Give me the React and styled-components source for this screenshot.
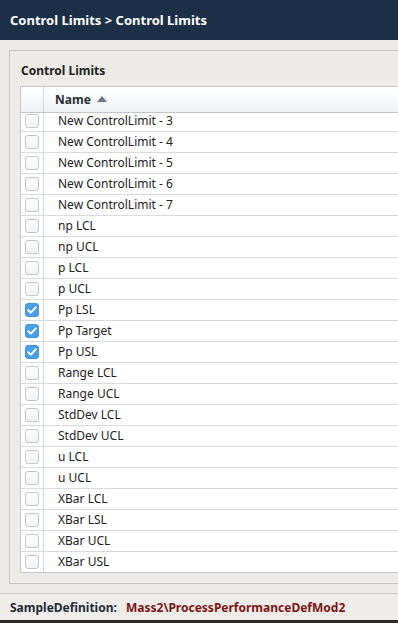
import React from 'react'
import styled, { createGlobalStyle } from 'styled-components'

const rows = [
  { name: 'New ControlLimit - 3' },
  { name: 'New ControlLimit - 4' },
  { name: 'New ControlLimit - 5' },
  { name: 'New ControlLimit - 6' },
  { name: 'New ControlLimit - 7' },
  { name: 'np LCL' },
  { name: 'np UCL' },
  { name: 'p LCL' },
  { name: 'p UCL' },
  { name: 'Pp LSL', checked: true },
  { name: 'Pp Target', checked: true },
  { name: 'Pp USL', checked: true },
  { name: 'Range LCL' },
  { name: 'Range UCL' },
  { name: 'StdDev LCL' },
  { name: 'StdDev UCL' },
  { name: 'u LCL' },
  { name: 'u UCL' },
  { name: 'XBar LCL' },
  { name: 'XBar LSL' },
  { name: 'XBar UCL' },
  { name: 'XBar USL' },
]

const Global = createGlobalStyle`
  html, body { margin:0; padding:0; }
  body {
    font-family: "Noto Sans", "Open Sans", sans-serif;
    font-size:12px;
    color:#222;
    background:#edebe7;
    overflow:hidden;
  }
`

const App = () => {
  return (
    <Page>
      <Global />
      <TopBar>Control Limits &gt; Control Limits</TopBar>
      <Main>
        <Panel>
          <PanelTitle>Control Limits</PanelTitle>
          <Grid>
            <HeadRow>
              <CheckCell />
              <HeadName>
                Name
                <SortArrow viewBox="0 0 10 6">
                  <path d="M0 6 L5 0 L10 6 Z" fill="#6f7a84" />
                </SortArrow>
              </HeadName>
            </HeadRow>
            <Body>
              <Scroll>
                {rows.map((r) => (
                  <Row key={r.name}>
                    <CheckCell>
                      <Box checked={r.checked}>
                        {r.checked && (
                          <svg width="10" height="8" viewBox="0 0 10 8">
                            <path d="M1.2 4.2 L3.8 6.6 L8.8 1.4" fill="none" stroke="#fff" strokeWidth="2" strokeLinecap="round" strokeLinejoin="round" />
                          </svg>
                        )}
                      </Box>
                    </CheckCell>
                    <NameCell>{r.name}</NameCell>
                  </Row>
                ))}
              </Scroll>
            </Body>
          </Grid>
        </Panel>
      </Main>
      <Footer>
        <Label>SampleDefinition:</Label>
        <Value>Mass2\ProcessPerformanceDefMod2</Value>
      </Footer>
    </Page>
  )
}

export default App

const Page = styled.div`
  width:398px;
  height:623px;
  display:flex;
  flex-direction:column;
  overflow:hidden;
`
const TopBar = styled.div`
  height:40px;
  flex:none;
  background:#1b3046;
  color:#fff;
  font-weight:700;
  font-size:13px;
  display:flex;
  align-items:center;
  padding-left:10px;
`
const Main = styled.div`
  height:553px;
  flex:none;
  padding:10px 0 0 9px;
  box-sizing:border-box;
`
const Panel = styled.div`
  height:534px;
  box-sizing:border-box;
  border:1px solid #c6c6c4;
  border-right:none;
  padding:0 0 0 10px;
`
const PanelTitle = styled.div`
  height:35px;
  font-weight:700;
  font-size:12px;
  display:flex;
  align-items:center;
  padding-top:4px;
  box-sizing:border-box;
  padding-left:1px;
`
const Grid = styled.div`
  border:1px solid #c3c6ca;
  border-right:none;
  background:#fff;
`
const HeadRow = styled.div`
  display:flex;
  height:25px;
  border-bottom:1px solid #c3c6ca;
  background:linear-gradient(#ffffff, #eef2f5);
`
const CheckCell = styled.div`
  width:22px;
  flex:none;
  border-right:1px solid #d3d6da;
  display:flex;
  align-items:center;
  justify-content:center;
`
const HeadName = styled.div`
  display:flex;
  align-items:center;
  padding-left:11px;
  font-weight:700;
  color:#2a2f36;
`
const SortArrow = styled.svg`
  width:10px;
  height:6px;
  margin-left:6px;
  margin-top:-1px;
`
const Body = styled.div`
  height:459px;
  overflow:hidden;
`
const Scroll = styled.div`
  margin-top:-2px;
`
const Row = styled.div`
  display:flex;
  height:20px;
  border-bottom:1px solid #d8dbdf;
`
const NameCell = styled.div`
  display:flex;
  align-items:center;
  padding:0 0 1px 14px;
  color:#222;
`
const Box = styled.div`
  width:14px;
  height:14px;
  box-sizing:border-box;
  border-radius:3px;
  display:flex;
  align-items:center;
  justify-content:center;
  border:1px solid ${(p) => (p.checked ? '#3f95dc' : '#c2c5c9')};
  background:${(p) => (p.checked ? '#4aa0e6' : 'linear-gradient(#ffffff, #f1f3f5)')};
`
const Footer = styled.div`
  flex:1;
  border-top:1px solid #cacac8;
  border-bottom:3px solid #2a2a2a;
  background:#eeede9;
  display:flex;
  align-items:center;
  padding-left:10px;
  font-weight:700;
  font-size:12px;
`
const Label = styled.span`
  color:#1e2a36;
  width:116px;
`
const Value = styled.span`
  color:#7a1616;
`
